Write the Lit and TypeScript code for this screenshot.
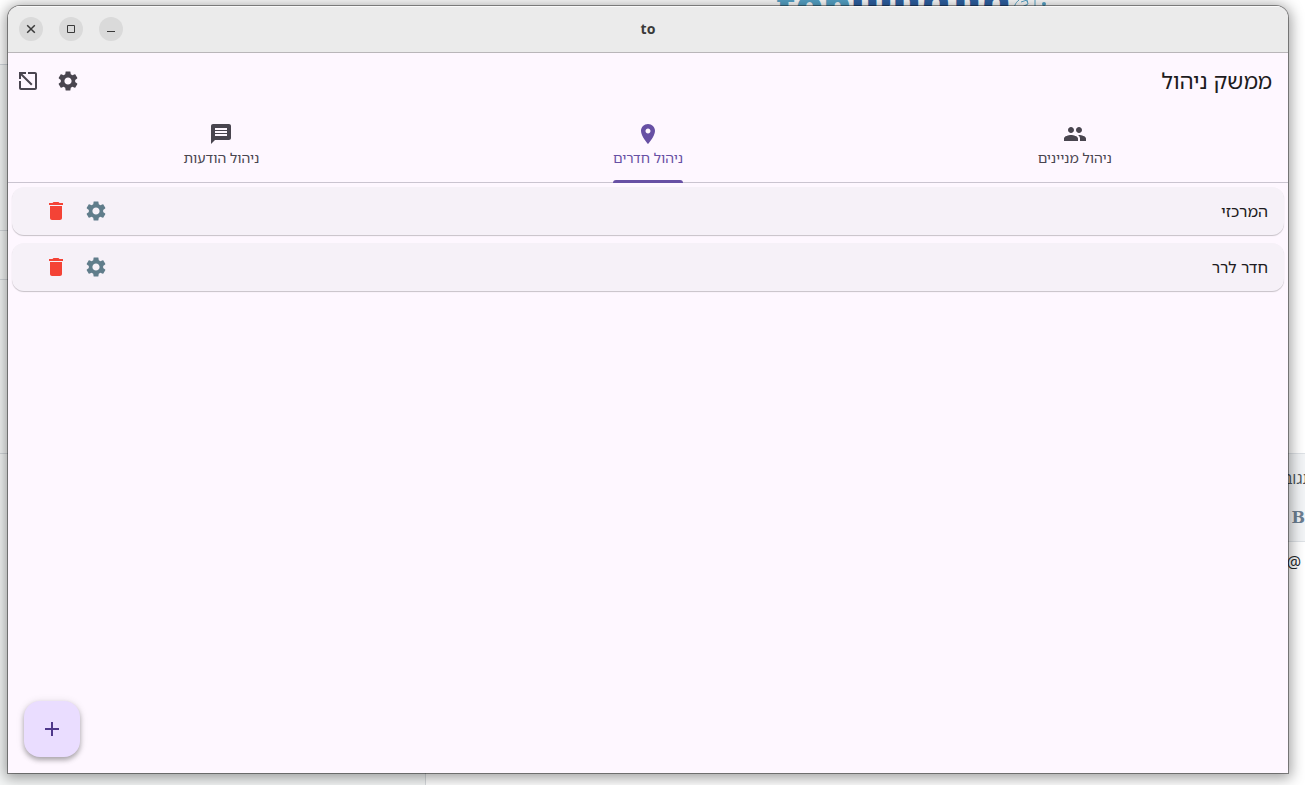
import { LitElement, html, css, svg } from "lit";
import { customElement, property, state } from "lit/decorators.js";

const ICONS: Record<string, string> = {
  settings:
    "M19.14 12.94c.04-.3.06-.61.06-.94 0-.32-.02-.64-.07-.94l2.03-1.58c.18-.14.23-.41.12-.61l-1.92-3.32c-.12-.22-.37-.29-.59-.22l-2.39.96c-.5-.38-1.03-.7-1.62-.94l-.36-2.54c-.04-.24-.24-.41-.48-.41h-3.84c-.24 0-.43.17-.47.41l-.36 2.54c-.59.24-1.13.57-1.62.94l-2.39-.96c-.22-.08-.47 0-.59.22L2.74 8.87c-.12.21-.08.47.12.61l2.03 1.58c-.05.3-.09.63-.09.94s.02.64.07.94l-2.03 1.58c-.18.14-.23.41-.12.61l1.92 3.32c.12.22.37.29.59.22l2.39-.96c.5.38 1.03.7 1.62.94l.36 2.54c.05.24.24.41.48.41h3.84c.24 0 .44-.17.47-.41l.36-2.54c.59-.24 1.13-.56 1.62-.94l2.39.96c.22.08.47 0 .59-.22l1.92-3.32c.12-.22.07-.47-.12-.61l-2.01-1.58zM12 15.6c-1.98 0-3.6-1.62-3.6-3.6s1.62-3.6 3.6-3.6 3.6 1.62 3.6 3.6-1.62 3.6-3.6 3.6z",
  open:
    "M3 3h7v2H6.400l10.100 10.100-1.400 1.400L5 6.400V10H3zM12 3h7c1.100 0 2 .900 2 2v14c0 1.100-.900 2-2 2H5c-1.100 0-2-.900-2-2v-7h2v7h14V5h-7z",
  message:
    "M20 2H4.010c-1.100 0-2 .900-2 2L2 22l4-4h14c1.100 0 2-.900 2-2V4c0-1.100-.900-2-2-2zm-2 12H6v-2h12v2zm0-3H6V9h12v2zm0-3H6V6h12v2z",
  place:
    "M12 2C8.130 2 5 5.130 5 9c0 5.250 7 13 7 13s7-7.750 7-13c0-3.870-3.130-7-7-7zm0 9.500c-1.380 0-2.500-1.120-2.500-2.500s1.120-2.500 2.500-2.500 2.500 1.120 2.500 2.500-1.120 2.500-2.500 2.500z",
  people:
    "M16 11c1.660 0 2.990-1.340 2.990-3S17.660 5 16 5c-1.660 0-3 1.340-3 3s1.340 3 3 3zm-8 0c1.660 0 2.990-1.340 2.990-3S9.660 5 8 5C6.340 5 5 6.340 5 8s1.340 3 3 3zm0 2c-2.330 0-7 1.170-7 3.500V19h14v-2.500c0-2.330-4.670-3.500-7-3.500zm8 0c-.290 0-.620.020-.970.050 1.160.840 1.970 1.970 1.970 3.450V19h6v-2.500c0-2.330-4.670-3.500-7-3.500z",
  delete: "M6 19c0 1.100.900 2 2 2h8c1.100 0 2-.900 2-2V7H6v12zM19 4h-3.500l-1-1h-5l-1 1H5v2h14V4z",
  add: "M19 13h-6v6h-2v-6H5v-2h6V5h2v6h6v2z",
};

const icon = (name: string) => html`
  <svg viewBox="0 0 24 24" width="24" height="24" fill="currentColor" aria-hidden="true">
    ${svg`<path d=${ICONS[name]} />`}
  </svg>
`;

const base = css`
  :host,
  * {
    box-sizing: border-box;
  }
  button {
    display: flex;
    align-items: center;
    justify-content: center;
    margin: 0;
    padding: 0;
    border: 0;
    background: none;
    color: inherit;
    font: inherit;
    cursor: pointer;
  }
  svg {
    display: block;
    flex: none;
  }
`;

@customElement("page-behind")
export class PageBehind extends LitElement {
  static styles = [
    base,
    css`
      :host {
        display: block;
        overflow: hidden;
        background: #ffffff;
        font-family: "Open Sans", "Noto Sans", sans-serif;
      }
      .side {
        position: absolute;
        top: 64px;
        left: 0;
        bottom: 0;
        width: 426px;
        border-top: 1px solid #d3d8de;
        border-right: 1px solid #d8dbde;
        background: #f5f7f7;
      }
      .rule {
        position: absolute;
        left: 0;
        width: 100%;
        height: 1px;
        background: #d5d9dd;
      }
      .first {
        top: 165px;
      }
      .second {
        top: 214px;
      }
      .third {
        top: 388px;
      }
      .logo {
        position: absolute;
        top: -18px;
        left: 776px;
        display: flex;
        direction: ltr;
        font-size: 43px;
        line-height: 44px;
        font-weight: 800;
        color: #2f62a3;
        white-space: nowrap;
      }
      .top {
        color: #57a5c9;
      }
      .mark {
        margin-top: 16px;
        color: #57a5c9;
      }
      .composer {
        position: absolute;
        top: 453px;
        right: 0;
        width: 200px;
        border-top: 1px solid #dee2e6;
        color: #495057;
        direction: ltr;
      }
      .tools {
        height: 88px;
        padding-top: 12px;
        border-bottom: 1px solid #dee2e6;
        background: #f2f4f6;
      }
      .reply {
        margin-right: -8px;
        text-align: right;
        font-size: 16px;
        line-height: 24px;
      }
      .bold {
        padding-top: 16px;
        text-align: right;
        font: 700 16px/24px "DejaVu Serif", serif;
        color: #6c7f92;
      }
      .mention {
        padding: 8px 4px 0 0;
        text-align: right;
        font-size: 16px;
        line-height: 24px;
        color: #212529;
      }
    `,
  ];

  render() {
    return html`
      <div class="side">
        <div class="rule first"></div>
        <div class="rule second"></div>
        <div class="rule third"></div>
      </div>
      <div class="logo">
        <span class="top">top</span><span>מתמחים</span>
        <svg class="mark" width="38" height="14" viewBox="0 0 38 14" fill="none" stroke="currentColor">
          <path d="M2 14C3 9 4 5 8 2M10 4l6-2 1 4-6 3 5-1M13 1l4 3M24 1v10M20 9h4" />
          <circle cx="33" cy="6" r="2" fill="currentColor" stroke="none" />
        </svg>
      </div>
      <div class="composer">
        <div class="tools">
          <div class="reply">תגובה</div>
          <div class="bold">B</div>
        </div>
        <div class="mention">@</div>
      </div>
    `;
  }
}

@customElement("title-bar")
export class TitleBar extends LitElement {
  @property() heading = "";

  static styles = [
    base,
    css`
      :host {
        display: grid;
        grid-template-columns: 1fr auto 1fr;
        align-items: center;
        height: 47px;
        padding: 0 11px;
        direction: ltr;
        border-bottom: 1px solid #b9b6b9;
        background: #ebebeb;
        box-shadow: inset 0 1px #fafafa;
        color: #3a3a3a;
      }
      .controls {
        display: flex;
        gap: 16px;
      }
      .control {
        width: 24px;
        height: 24px;
        border-radius: 50%;
        background: #dadada;
      }
      .heading {
        margin: 0;
        font: 700 14px/20px "Noto Sans", sans-serif;
      }
    `,
  ];

  render() {
    const glyph = (d: string, weight = 1) => html`
      <svg viewBox="0 0 16 16" width="16" height="16" fill="none" stroke="currentColor" stroke-width=${weight}>
        ${svg`<path d=${d} />`}
      </svg>
    `;
    return html`
      <div class="controls">
        <button class="control" aria-label="סגירה">${glyph("M4.200 4.200l7.600 7.600M11.800 4.200l-7.600 7.600", 1.5)}</button>
        <button class="control" aria-label="הגדלה">${glyph("M4.500 4.500h7v7h-7z")}</button>
        <button class="control" aria-label="מזעור">${glyph("M4 10.500h8")}</button>
      </div>
      <h1 class="heading">${this.heading}</h1>
    `;
  }
}

@customElement("room-card")
export class RoomCard extends LitElement {
  @property() name = "";

  static styles = [
    base,
    css`
      :host {
        display: flex;
        align-items: center;
        justify-content: space-between;
        height: 48px;
        padding: 0 16px 0 24px;
        border-radius: 12px;
        background: #f6f1f8;
        box-shadow: 0 1px 1px rgba(0, 0, 0, 0.22);
      }
      .name {
        font-size: 16px;
        line-height: 24px;
      }
      .actions {
        display: flex;
      }
      .action {
        width: 40px;
        height: 40px;
      }
      .edit {
        color: #607d8b;
      }
      .remove {
        color: #f44336;
      }
    `,
  ];

  render() {
    return html`
      <span class="name">${this.name}</span>
      <div class="actions">
        <button class="action edit" aria-label="הגדרות">${icon("settings")}</button>
        <button class="action remove" aria-label="מחיקה">${icon("delete")}</button>
      </div>
    `;
  }
}

@customElement("app-root")
export class AppRoot extends LitElement {
  @state() private selected = 1;

  private tabs = [
    { icon: "people", label: "ניהול מניינים" },
    { icon: "place", label: "ניהול חדרים" },
    { icon: "message", label: "ניהול הודעות" },
  ];

  private rooms = ["המרכזי", "חדר לרר"];

  static styles = [
    base,
    css`
      :host {
        position: relative;
        display: flex;
        height: 100vh;
        padding: 6px 17px 12px 8px;
        overflow: hidden;
        direction: rtl;
        font-family: "Noto Sans Hebrew", "Open Sans", "Noto Sans", sans-serif;
        color: #1d1b20;
      }
      .behind {
        position: absolute;
        inset: 0;
      }
      .window {
        position: relative;
        display: flex;
        flex: 1;
        flex-direction: column;
        overflow: hidden;
        border-radius: 12px 12px 0 0;
        background: #fef7ff;
        box-shadow:
          0 0 0 1px rgba(0, 0, 0, 0.4),
          0 2px 14px 3px rgba(0, 0, 0, 0.38);
      }
      .app-bar {
        display: flex;
        align-items: center;
        justify-content: space-between;
        height: 56px;
        padding: 0 16px 0 0;
      }
      .title {
        margin: 0;
        font-size: 22px;
        line-height: 28px;
        font-weight: 400;
      }
      .actions {
        display: flex;
        color: #49454f;
      }
      .action {
        width: 40px;
        height: 40px;
      }
      .tabs {
        display: grid;
        grid-template-columns: repeat(3, 1fr);
        justify-items: center;
        height: 74px;
        border-bottom: 1px solid #cac4d0;
      }
      .tab {
        position: relative;
        flex-direction: column;
        justify-content: flex-start;
        gap: 2px;
        height: 74px;
        padding-top: 13px;
        color: #49454f;
        font-size: 14px;
        line-height: 20px;
      }
      .tab[aria-selected="true"] {
        color: #6750a4;
      }
      .tab[aria-selected="true"]::after {
        content: "";
        position: absolute;
        right: 0;
        bottom: 0;
        left: 0;
        height: 3px;
        border-radius: 3px 3px 0 0;
        background: currentColor;
      }
      .rooms {
        display: flex;
        flex: 1;
        flex-direction: column;
        gap: 8px;
        padding: 4px;
      }
      .add {
        position: absolute;
        bottom: 16px;
        left: 16px;
        width: 56px;
        height: 56px;
        border-radius: 16px;
        background: #eaddff;
        color: #4f378b;
        box-shadow:
          0 3px 5px rgba(0, 0, 0, 0.28),
          0 1px 8px rgba(0, 0, 0, 0.12);
      }
    `,
  ];

  render() {
    return html`
      <page-behind class="behind" aria-hidden="true"></page-behind>
      <main class="window">
        <title-bar heading="to"></title-bar>
        <header class="app-bar">
          <h2 class="title">ממשק ניהול</h2>
          <div class="actions">
            <button class="action" aria-label="הגדרות">${icon("settings")}</button>
            <button class="action" aria-label="פתיחה בחלון">${icon("open")}</button>
          </div>
        </header>
        <div class="tabs" role="tablist">
          ${this.tabs.map(
            (tab, i) => html`
              <button
                class="tab"
                role="tab"
                aria-selected=${i === this.selected ? "true" : "false"}
                @click=${() => (this.selected = i)}
              >
                ${icon(tab.icon)}<span>${tab.label}</span>
              </button>
            `,
          )}
        </div>
        <section class="rooms">
          ${this.rooms.map((room) => html`<room-card name=${room}></room-card>`)}
        </section>
        <button class="add" aria-label="הוספת חדר">${icon("add")}</button>
      </main>
    `;
  }
}
